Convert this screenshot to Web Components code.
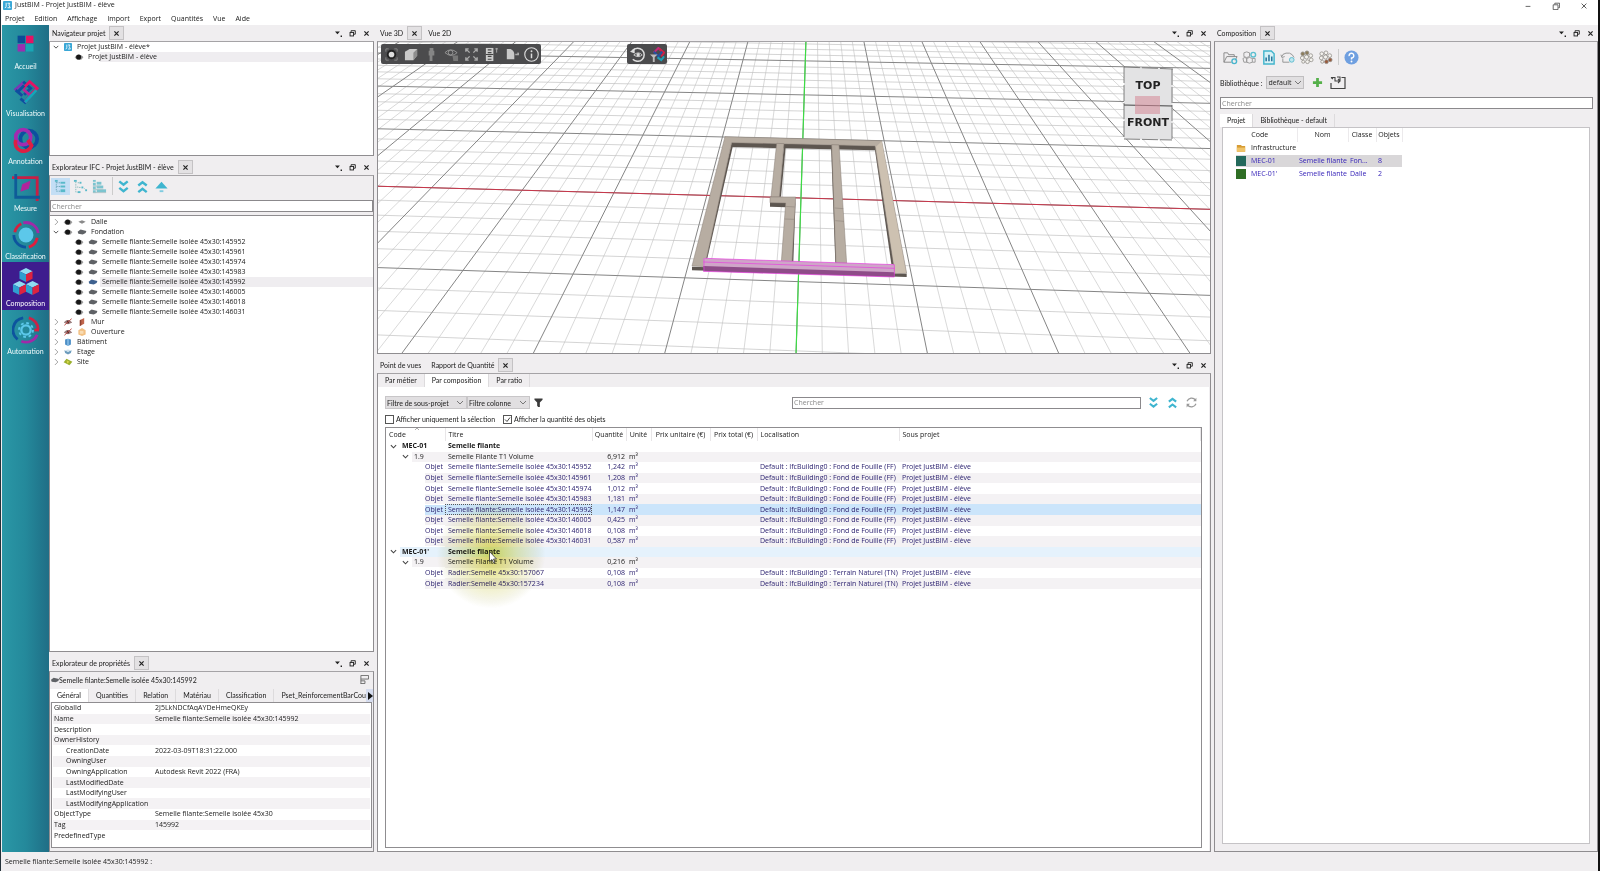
<!DOCTYPE html>
<html lang="fr">
<head>
<meta charset="utf-8">
<title>JustBIM - Projet JustBIM - élève</title>
<style>
html,body{margin:0;height:100%}
body{font:7px/10px "Open Sans","Noto Sans",sans-serif;color:#1a1a1a;background:#f0eef0;overflow:hidden;--ui:"Lato","Open Sans",sans-serif}
</style>
</head>
<body>
<bim-app></bim-app>
<script>
const define=(name,html,setup)=>{
  const t=document.createElement('template');t.innerHTML=html;
  customElements.define(name,class extends HTMLElement{
    constructor(){super();this.attachShadow({mode:'open'})}
    connectedCallback(){
      if(this.shadowRoot.firstChild)return;
      this.shadowRoot.append(t.content.cloneNode(true));
      if(setup)setup.call(this,this.shadowRoot);
    }
  });
};

/* ---------- icons ---------- */
const eye='<path d="M0 6Q5 0 11 4.500L12 6L9.500 9Q3 11 0 6Z" fill="#9a9a9a"/><circle cx="5.500" cy="5.500" r="3.500" fill="#161616"/>';
const cluster=(a,b)=>`<g fill="#f4f2ee" stroke="#8d8b86" stroke-width=".8"><circle cx="4" cy="4" r="2" fill="${a}"/><circle cx="8.500" cy="3" r="2" fill="${a}"/><circle cx="3.500" cy="8.500" r="2"/><circle cx="8" cy="7.500" r="2.200"/><circle cx="12.500" cy="6" r="2"/><circle cx="13" cy="10.500" r="2" fill="${b}"/><circle cx="9" cy="12.500" r="2" fill="${b}"/><circle cx="4.500" cy="12.500" r="1.600"/></g>`;
const cube=(x,y)=>`<g transform="translate(${x} ${y})"><path d="M7 0L14 3.500L7 7L0 3.500Z" fill="#8fdcf2"/><path d="M0 3.500L7 7V15L0 11.500Z" fill="#2f9fd0"/><path d="M7 7L14 3.500V11.500L7 15Z" fill="#dc2340"/></g>`;
const ICONS={
 logo:['0 0 10 10','<rect width="10" height="10" rx="1" fill="#3aa7d6"/><path d="M3.500 2V6Q3.500 7.500 2 7.500M5 2.500H7.500L6.500 4.500L8 7.500H5" fill="none" stroke="#fff"/>'],
 home:['0 0 30 30','<rect x="6" y="5" width="8" height="8" fill="#0c4b97"/><rect x="15" y="5" width="8" height="8" fill="#e51264"/><rect x="6" y="14" width="8" height="8" fill="#9a2fb0"/><rect x="15" y="14" width="8" height="8" fill="#18a6b5"/>'],
 visual:['0 0 30 30','<g fill="none" stroke-width="3"><path d="M13 4L4 12L11 19" stroke="#7b36b5"/><path d="M12 4L20 11L13 18" stroke="#0d4f9f"/><path d="M12 11L19 4L27 11L20 18" stroke="#e51264"/><path d="M6 15L13 8" stroke="#0d4f9f"/><path d="M11 19L4 13M9 22L14 26L18 22" stroke="#0d4f9f"/><path d="M12 12L20 19L14 26" stroke="#b5259a"/><path d="M26 13L14 26" stroke="#12a6b9"/></g>'],
 annot:['0 0 30 30','<g fill="none" stroke-width="4"><circle cx="18" cy="14" r="9" stroke="#0d4f9f"/><circle cx="12" cy="12" r="8" stroke="#a32bb0"/><path d="M4 15A9 9 0 1 0 21 21L17 15" stroke="#dc1f43"/></g>'],
 measure:['0 0 30 30','<g fill="none" stroke-width="3"><path d="M0 5H27V30" stroke="#c81f45"/><path d="M4 1V26H30" stroke="#0f5c98"/></g><path d="M9 20L11 12L20 8L18 17Z" fill="#b0249c"/>'],
 classif:['0 0 30 30','<circle cx="15" cy="15" r="8" fill="#5cc8ea"/><g fill="none" stroke-width="3"><path d="M3 12A13 13 0 0 1 10 3" stroke="#d4213f"/><path d="M12 2A13 13 0 0 1 28 13" stroke="#a02aa8"/><path d="M27 18A13 13 0 0 1 18 28" stroke="#e01d3d"/><path d="M2 15A13 13 0 0 0 15 28" stroke="#0d549e"/></g>'],
 compo:['0 0 30 30',cube(8,0)+cube(1,14)+cube(15,14)],
 auto:['0 0 30 30','<circle cx="15" cy="15" r="5" fill="none" stroke="#5cc8ea" stroke-width="2.500"/><circle cx="15" cy="15" r="7.500" fill="none" stroke="#5cc8ea" stroke-width="2" stroke-dasharray="3 2.900"/><g fill="none" stroke-width="3"><path d="M12 2A13 13 0 0 0 6 25" stroke="#0d549e"/><path d="M18 2A13 13 0 0 1 28 14" stroke="#c92448"/><path d="M29 15L24 15" stroke="#e01d3d"/><path d="M27 20A13 13 0 0 1 10 27" stroke="#a02aa8"/></g>'],
 chevR:['0 0 8 8','<path d="M2.500 0L6.500 4L2.500 8" fill="none" stroke="#888"/>'],
 chevD:['0 0 8 8','<path d="M1 2.500L4 5.500L7 2.500" fill="none" stroke="#444" stroke-width="1.200"/>'],
 eye:['0 0 12 11',eye],
 eyeoff:['0 0 12 11','<path d="M1 6Q5 1 11 6Q6 10 1 6Z" fill="#b9a7a7" stroke="#7c5555"/><circle cx="6" cy="5.500" r="2" fill="#533"/><path d="M1 10L11 1" stroke="#b8433c" stroke-width="1.300"/>'],
 slab:['0 0 12 11','<path d="M1 5L6 3L11 5L6 8Z" fill="#8a8a8a"/>'],
 found:['0 0 12 11','<path d="M0 5L4 2L12 4L11 7L7 9L1 8Z" fill="#5f6266"/>'],
 foundsel:['0 0 12 11','<path d="M0 5L4 2L12 4L11 7L7 9L1 8Z" fill="#3e618f"/>'],
 wall:['0 0 12 11','<path d="M3 3L9 0V8L3 11Z" fill="#c1654c"/><path d="M3 3L5 2V10L3 11Z" fill="#8d4334"/>'],
 opening:['0 0 12 11','<path d="M1 3L6 0L11 3V9L6 11L1 9Z" fill="#f2c083"/><path d="M3 4H8V8H3Z" fill="#f8dcb4"/>'],
 building:['0 0 12 11','<path d="M2 2L6 1L10 2V9L6 11L2 9Z" fill="#4d8fc7"/><path d="M6 1V11" stroke="#9fd0f2" stroke-width="1.500"/>'],
 storey:['0 0 12 11','<path d="M1 3L6 5L11 3L10 7L6 9L2 7Z" fill="#6d9dbd"/><path d="M2 3L6 5L10 3L6 2Z" fill="#cfe2ee"/>'],
 site:['0 0 12 11','<path d="M0 6L4 1L12 5L8 10Z" fill="#9bb02c"/><path d="M4 3L8 5L5 8Z" fill="#d9d64c"/>'],
 folder:['0 0 12 11','<path d="M1 2H6L7 3H11V10H1Z" fill="#d79c34"/><path d="M1 5H11V10H1Z" fill="#f0c469"/>'],
 sqTeal:['0 0 10 10','<rect width="10" height="10" fill="#23695b"/>'],
 sqGreen:['0 0 10 10','<rect width="10" height="10" fill="#2f6e25"/>'],
 tree1:['0 0 16 16','<g fill="#58b9c9"><rect x="2" y="1" width="3" height="2"/><rect x="8" y="3" width="5" height="2"/><rect x="8" y="7" width="5" height="2"/><rect x="8" y="11" width="5" height="3"/></g><path d="M3.500 3V13H8M3.500 8H8M3.500 4H8" fill="none" stroke="#6fa9bb" stroke-dasharray="1.500 1"/>'],
 tree2:['0 0 16 16','<g fill="#58b9c9"><rect x="1" y="1" width="3" height="2"/><rect x="7" y="3" width="2" height="2"/><rect x="5" y="13" width="3" height="2"/><rect x="9" y="8" width="2" height="2"/><rect x="13" y="11" width="2" height="2"/></g><path d="M3 3V14H5M5 4H7M5 8V9H9M12 10L13 11" fill="none" stroke="#8bb" stroke-dasharray="1.500 1"/>'],
 tree3:['0 0 16 16','<g fill="#7cc4cf"><rect x="1" y="1" width="3" height="2"/><rect x="1" y="4" width="3" height="3"/><rect x="1" y="8" width="3" height="3"/><rect x="1" y="12" width="3" height="3"/><rect x="5" y="3" width="5" height="3"/><rect x="5" y="7" width="7" height="3"/><rect x="5" y="11" width="10" height="3"/></g><path d="M1 7.500H9M1 11H12M1 14.500H15" stroke="#a9c3c8"/>'],
 down2:['0 0 16 16','<path d="M3.500 2.500L8 6L12.500 2.500M3.500 9.500L8 13L12.500 9.500" fill="none" stroke="#3fb5cf" stroke-width="2.600"/>'],
 up2:['0 0 16 16','<path d="M3.500 7L8 3.500L12.500 7M3.500 14L8 10.500L12.500 14" fill="none" stroke="#3fb5cf" stroke-width="2.600"/>'],
 upload:['0 0 16 16','<path d="M1.500 10L8 3L14.500 10Z" fill="#3fb5cf"/><path d="M6 12H10V14H6Z" fill="#7fcbe0"/>'],
 refresh:['0 0 16 16','<path d="M2.500 6.500A6 6 0 0 1 13 5M13.500 9.500A6 6 0 0 1 3 11" fill="none" stroke="#999" stroke-width="1.500"/><path d="M14 2V6.500H10ZM2 14V9.500H6Z" fill="#999"/>'],
 funnel:['0 0 10 10','<path d="M.5 .5H9.500V2L6.500 5V10H4.500L3.500 8.500V5L.5 2Z" fill="#3b3b3b"/>'],
 layout:['0 0 10 10','<path d="M1 10V.5H9.500V4.500H1M1 6.500H5.500V9.500H1" fill="none" stroke="#666"/>'],
 f1:['0 0 16 16','<path d="M1 13V3H5L6 5H12V7M1 13L4 7H15L13 11M1 13H9" fill="none" stroke="#888"/><circle cx="12" cy="12" r="2.500" fill="none" stroke="#49b5cd" stroke-width="1.500"/>'],
 f2:['0 0 16 16','<path d="M5 2L8 3V7L5 8L2 7V3ZM8 8L11 9V13L8 14L5 13V9ZM3 8L5 9V13L2 13L1 9Z" fill="none" stroke="#999"/><circle cx="12" cy="5" r="2.500" fill="none" stroke="#5bbfd0" stroke-width="1.500"/><path d="M11 9L14 9V13H11" fill="none" stroke="#999"/>'],
 f3:['0 0 16 16','<path d="M3 1H11L14 4V15H3Z" fill="#d7f1f6" stroke="#43b4cc" stroke-width="1.500"/><path d="M5.500 12V8M8.500 12V5M11.500 12V7" stroke="#24749b" stroke-width="1.600"/>'],
 f4:['0 0 16 16','<path d="M2 7A6 4 0 0 1 13 5L15 8M1 5L2 8L5 7M3 9V13H10" fill="none" stroke="#929292"/><circle cx="12.500" cy="10.500" r="2.500" fill="#bfe6ef" stroke="#5dbbce"/>'],
 f5:['0 0 16 16',cluster('#8d7d5c','#f4f2ee')],
 f6:['0 0 16 16',cluster('#f4f2ee','#9a5a3c')],
 help:['0 0 16 16','<circle cx="8" cy="8" r="7.500" fill="#6f9fe0"/><path d="M5.500 6.500A2.500 2.500 0 1 1 8 8.500V10" fill="none" stroke="#fff" stroke-width="1.500"/><circle cx="8" cy="12.200" r="1" fill="#fff"/>'],
 plus:['0 0 12 12','<path d="M6 1V11M1 6H11" stroke="#55b04a" stroke-width="3"/>'],
 importIc:['0 0 16 14','<path d="M1 7V12.500H15V1.500H11.500" fill="none" stroke="#444" stroke-width="1.200"/><path d="M1 1.500H5V5H10V1H7M3 3L1 1.500M8 3L10 5L8 7" fill="none" stroke="#444" stroke-width="1.100"/>'],
 v1:['0 0 16 16','<path d="M2 5V2H5M11 2H14V5M14 11V14H11M5 14H2V11" fill="none" stroke="#888"/><circle cx="8" cy="8" r="5" fill="#222"/><circle cx="8" cy="8" r="3" fill="#ddd"/>'],
 v2:['0 0 16 16','<path d="M1 5L6 2H14V9L10 14H1Z" fill="#c9c9c9"/><path d="M10 6L14 2V9L10 14Z" fill="#8e8e8e"/>'],
 v3:['0 0 16 16','<path d="M6 1H10V4H11V9H9V15H6V9H5V4H6Z" fill="#858585"/>'],
 v4:['0 0 16 16','<path d="M1 6Q7 0 14 6Q8 12 1 6Z" fill="none" stroke="#999"/><circle cx="7" cy="6" r="2.500" fill="none" stroke="#999"/><path d="M9 9H15V15H10Z" fill="#777"/>'],
 v5:['0 0 16 16','<g fill="none" stroke="#aaa" stroke-width="1.500"><path d="M6 6L2 2M2 5V2H5M10 6L14 2M11 2H14V5M6 10L2 14M2 11V14H5M10 10L14 14M11 14H14V11"/></g>'],
 v6:['0 0 16 16','<path d="M2 1H10V15H2Z" fill="#ccc"/><path d="M4 3H8M4 6H8M4 10H8M4 13H8M2 8H10" stroke="#444" stroke-width="1.200"/><path d="M12 2H15M13.500 1V6" stroke="#aaa"/>'],
 v7:['0 0 16 16','<path d="M3 2H7Q11 4 11 8Q11 12 11 13H3Z" fill="#c9c9c9"/><path d="M12 8H16M14.500 6L16 8" stroke="#aaa" stroke-width="1.500"/>'],
 v8:['0 0 16 16','<circle cx="8" cy="8" r="7.200" fill="none" stroke="#ddd" stroke-width="1.200"/><path d="M8 7V12" stroke="#ddd" stroke-width="1.600"/><circle cx="8" cy="4.500" r="1" fill="#ddd"/>'],
 w1:['0 0 16 16','<path d="M3 3.500A7 7 0 1 1 3 13" fill="none" stroke="#ddd" stroke-width="1.600"/><path d="M0 5L5 7L5 1Z" fill="#ddd"/><path d="M4 8.500Q9 4 13 8.500Q9 12 4 8.500Z" fill="none" stroke="#ccc"/><circle cx="8.700" cy="8.300" r="1.800" fill="#ddd"/>'],
 w2:['0 0 16 16','<g fill="none" stroke-width="2.200"><path d="M4 6L9 1L12 4" stroke="#c22a78"/><path d="M10 2L15 6L12 10" stroke="#d31f45"/><path d="M4 5L9 10L13 5" stroke="#27509f"/><path d="M8 11L12 14L15 10" stroke="#1d9fb5"/></g><path d="M0 8H8L5 11V16H3V11Z" fill="#bbb"/>'],
 menuTri:['0 0 10 10','<path d="M0 2H7L3.500 6Z" fill="#222"/><path d="M8 8H10V10H8Z" fill="#222"/>'],
 restore:['0 0 10 10','<path d="M3 3V1H9V6H7" fill="none" stroke="#222" stroke-width="1.300"/><rect x="1.500" y="3.500" width="5" height="5" fill="none" stroke="#222" stroke-width="1.300"/>'],
 close:['0 0 10 10','<path d="M2 2L8 8M8 2L2 8" stroke="#222" stroke-width="1.700"/>'],
 wmin:['0 0 10 10','<path d="M2 5.500H8" stroke="#444"/>'],
 wmax:['0 0 10 10','<path d="M3.500 3V1.500H9.500V7H8M1.500 3.500H7.500V9.500H1.500Z" fill="none" stroke="#444"/>'],
 wclose:['0 0 10 10','<path d="M2 2L8 8M8 2L2 8" stroke="#333"/>'],
 arrowR:['0 0 8 8','<path d="M2 0L7 4L2 8Z" fill="#111"/>'],
 sortUp:['0 0 6 4','<path d="M1 3L3 1L5 3" fill="none" stroke="#999" stroke-width=".8"/>']
};
define('bim-icon','<style>:host{display:inline-flex;flex:none;width:10px;height:10px}svg{width:100%;height:100%;display:block}</style>',function(r){
  const [vb,body]=ICONS[this.getAttribute('name')];
  r.innerHTML+=`<svg viewBox="${vb}" aria-hidden="true">${body}</svg>`;
});

/* ---------- dock panel ---------- */
define('dock-panel',`<style>
:host{display:flex;flex-direction:column;min-width:0;min-height:0}
header{display:flex;align-items:center;height:16px;flex:none;padding:0 3px;white-space:nowrap}
.tab{all:unset;padding-right:4px;line-height:14px;font-family:var(--ui)}
.tab+.tab,.x+.tab{padding-left:6px;padding-right:3px}
.x{all:unset;box-sizing:border-box;width:15px;height:14px;border:1px solid #c4c2c4;background:#e3e1e3;display:flex;align-items:center;justify-content:center}
.x bim-icon,.tools bim-icon{width:7px;height:7px}
.tools{margin-left:auto;display:flex;gap:7px;padding-right:1px}
.tools button{all:unset;display:flex}
.body{flex:1;display:flex;flex-direction:column;min-height:0;border:1px solid #8f8d90;border-top-color:#a5a3a6;box-sizing:border-box}
:host([plain]) .body{background:#fff}
</style><header></header><div class="body"><slot></slot></div>`,function(r){
  const active=+(this.getAttribute('active')||0);
  r.querySelector('header').innerHTML=this.getAttribute('tabs').split('|').map((t,i)=>
    `<button class="tab">${t}</button>`+(i===active?'<button class="x" aria-label="Fermer"><bim-icon name="close"></bim-icon></button>':'')).join('')+
    '<div class="tools">'+[['menuTri','Menu'],['restore','Détacher'],['close','Fermer']].map(([n,l])=>`<button aria-label="${l}"><bim-icon name="${n}"></bim-icon></button>`).join('')+'</div>';
});

/* ---------- search field ---------- */
define('search-field',`<style>
:host{display:block}
input{display:block;width:100%;box-sizing:border-box;height:12px;border:1px solid #8b898c;background:#fff;font:inherit;padding:0 1px;border-radius:0;outline:0}
input::placeholder{color:#8a8a8a}
</style><input type="text" placeholder="Chercher" aria-label="Chercher">`);

/* ---------- tab strip ---------- */
define('tab-strip',`<style>
:host{display:flex;height:13px;align-items:stretch;white-space:nowrap;overflow:hidden;flex:none;position:relative;font-family:var(--ui)}
button{all:unset;padding:0 7px;line-height:13px;border-right:1px solid #dddbdd}
button.on{background:#fff}
.next{position:absolute;right:0;top:0;height:13px;width:7px;padding:0;border:0;background:#d5dcee;display:flex;align-items:center}
.next bim-icon{width:8px;height:8px}
</style>`,function(r){
  const on=+(this.getAttribute('active')||0);
  r.innerHTML+=this.getAttribute('tabs').split('|').map((t,i)=>`<button${i===on?' class="on"':''}>${t}</button>`).join('')+
    (this.hasAttribute('more')?'<button class="next" aria-label="Suivant"><bim-icon name="arrowR"></bim-icon></button>':'');
});

/* ---------- main sidebar ---------- */
define('side-bar',`<style>
:host{display:block;width:47px;flex:none;margin-left:1px;background:linear-gradient(to right,#2a97a6,#24899b 50%,#1f6e86);font-family:var(--ui)}
nav{display:flex;flex-direction:column;height:332px}
a{flex:1;display:flex;flex-direction:column;align-items:center;color:#f0fafb;text-decoration:none;padding-top:6px;box-sizing:border-box}
a.on{background:#3e1c8e;color:#fff}
bim-icon{width:28px;height:28px}
span{margin-top:2px;line-height:10px}
</style><nav></nav>`,function(r){
  r.querySelector('nav').innerHTML=[['home','Accueil'],['visual','Visualisation'],['annot','Annotation'],['measure','Mesure'],['classif','Classification'],['compo','Composition'],['auto','Automation']]
   .map(([i,t])=>`<a href="#${i}"${i==='compo'?' class="on"':''}><bim-icon name="${i}"></bim-icon><span>${t}</span></a>`).join('');
});

/* ---------- tree ---------- */
define('tree-view',`<style>
:host{display:block}
.row{display:flex;align-items:center;height:10px;white-space:nowrap;line-height:10px}
.chev{width:8px;height:6px;margin:0 3px 0 2px}
.gap{width:12px;flex:none}
.ic{width:10px;height:8px;margin-right:4px}
.label{flex:1}
.row.sel{background:linear-gradient(to right,transparent 50px,#efedf0 50px)}
</style>`,function(r){
  const src=this.getAttribute('src');
  const S='Semelle filante:Semelle isolée 45x30:';
  const rows=src==='nav'
   ?[['chevD',['logo'],'Projet JustBIM - élève*'],['',['eye'],'Projet JustBIM - élève','sel']]
   :[['chevR',['eye','slab'],'Dalle'],['chevD',['eye','found'],'Fondation'],
     ...['145952','145961','145974','145983','145992','146005','146018','146031'].map(n=>['',['eye',n==='145992'?'foundsel':'found'],S+n,n==='145992'?'sel':'']),
     ['chevR',['eyeoff','wall'],'Mur'],['chevR',['eyeoff','opening'],'Ouverture'],['chevR',['building'],'Bâtiment'],['chevR',['storey'],'Etage'],['chevR',['site'],'Site']];
  r.innerHTML+=rows.map(([c,ic,t,s])=>`<div class="row ${s||''}">${c?`<bim-icon class="chev" name="${c}"></bim-icon>`:'<i class="gap"></i><i class="gap"></i>'}${ic.map(n=>`<bim-icon class="ic" name="${n}"></bim-icon>`).join('')}<span class="label">${t}</span></div>`).join('');
});

/* ---------- properties ---------- */
define('prop-table',`<style>
:host{display:block;flex:1;background:#fff;border:1px solid #8f8d90;margin:0 1px 3px 1px;padding:0 1px}
table{border-collapse:collapse;width:100%;height:138px;table-layout:fixed}
td,th{padding:0 0 0 1px;font-weight:400;text-align:left;line-height:10px;white-space:nowrap;overflow:visible}
th{width:101px;box-sizing:border-box}
th.in{padding-left:13px}
tr:nth-child(even){background:#f4f2f4}
</style><table></table>`,function(r){
  r.querySelector('table').innerHTML=[['GlobalId','2J5LkNDCfAqAYDeHmeQKEy'],['Name','Semelle filante:Semelle isolée 45x30:145992'],['Description',''],['OwnerHistory',''],['>CreationDate','2022-03-09T18:31:22.000'],['>OwningUser',''],['>OwningApplication','Autodesk Revit 2022 (FRA)'],['>LastModifiedDate',''],['>LastModifyingUser',''],['>LastModifyingApplication',''],['ObjectType','Semelle filante:Semelle isolée 45x30'],['Tag','145992'],['PredefinedType','']]
   .map(([k,v])=>`<tr><th scope="row"${k[0]==='>'?' class="in"':''}>${k.replace('>','')}</th><td>${v}</td></tr>`).join('');
});

/* ---------- quantities ---------- */
define('quantity-table',`<style>
:host{display:block;flex:1;background:#fff;border:1px solid #8f8d90;position:relative}
table{border-collapse:collapse;width:100%;height:161px;table-layout:fixed}
th,td{padding:0 0 0 3px;font-weight:400;text-align:left;line-height:10px;white-space:nowrap}
thead th{height:13px;border-right:1px solid #e8e6e8;box-sizing:border-box;position:relative}
thead bim-icon{position:absolute;left:28px;top:-1px;width:6px;height:4px}
th.c{text-align:center;padding:0}
td:first-child{padding:0}
.n{text-align:right;padding-right:1px}
.code{display:flex;align-items:center;height:10px;gap:5px}
.code bim-icon{width:7px;height:7px;margin-left:-10px}
.l0 .code{margin-left:14px}.l1 .code{margin-left:26px}.l2 .code{margin-left:39px}
.l2 td{color:#2c2270}
.l0 td{font-weight:700}
tbody tr:nth-child(even) td:not(:first-child),tbody tr:nth-child(even) .code{background:#f4f2f4}
tbody tr.sel td:not(:first-child),tbody tr.sel .code{background:#cbe5fb}
tbody tr.hot td:not(:first-child),tbody tr.hot .code{background:#e5f2fc}
tr.sel .t{outline:1px dotted #555;outline-offset:-1px}
.halo{position:absolute;left:50px;top:71px;width:110px;height:110px;border-radius:50%;background:radial-gradient(circle,rgba(216,214,60,.8) 0,rgba(222,220,120,.5) 35%,rgba(225,225,190,.3) 60%,rgba(255,255,255,0) 70%);mix-blend-mode:multiply}
.cursor{position:absolute;left:103px;top:123px;width:8px;height:13px}
</style><table><colgroup><col style="width:59px"><col style="width:147px"><col style="width:34px"><col style="width:25px"><col style="width:59px"><col style="width:47px"><col style="width:142px"><col></colgroup>
<thead><tr><th>Code<bim-icon name="sortUp"></bim-icon></th><th>Titre</th><th class="c">Quantité</th><th class="c">Unité</th><th class="c">Prix unitaire (€)</th><th class="c">Prix total (€)</th><th>Localisation</th><th>Sous projet</th></tr></thead><tbody></tbody></table>
<div class="halo"></div><svg class="cursor" viewBox="0 0 8 13"><path d="M.5 .5V10.500L3 8.500L4.500 12L6 11.500L4.500 8H7.500Z" fill="#fff" stroke="#333" stroke-width=".8"/></svg>`,function(r){
  const S='Semelle filante:Semelle isolée 45x30:',F='Default : IfcBuilding0 : Fond de Fouille (FF)',T='Default : IfcBuilding0 : Terrain Naturel (TN)',P='Projet JustBIM - élève';
  const rows=[[0,'MEC-01','Semelle filante',''],[1,'1.9','Semelle Filante T1 Volume','6,912'],
   ...[['145952','1,242'],['145961','1,208'],['145974','1,012'],['145983','1,181'],['145992','1,147'],['146005','0,425'],['146018','0,108'],['146031','0,587']].map(([n,q])=>[2,'Objet',S+n,q,F,P,n==='145992'?'sel':'']),
   [0,"MEC-01'",'Semelle filante','','','','hot'],[1,'1.9','Semelle Filante T1 Volume','0,216'],
   [2,'Objet','Radier:Semelle 45x30:157067','0,108',T,P],[2,'Objet','Radier:Semelle 45x30:157234','0,108',T,P]];
  r.querySelector('tbody').innerHTML=rows.map(([l,c,t,q,loc='',sp='',cl=''])=>`<tr class="l${l} ${cl}"><td><div class="code">${l<2?'<bim-icon name="chevD"></bim-icon>':''}<span>${c}</span></div></td><td class="t">${t}</td><td class="n">${q}</td><td>${q?'m³':''}</td><td></td><td></td><td>${loc}</td><td>${sp}</td></tr>`).join('');
});

/* ---------- quantity report ---------- */
define('quantity-report',`<style>
:host{display:flex;flex-direction:column;flex:1;min-height:0}
.page{flex:1;display:flex;flex-direction:column;background:#fff;padding:9px 7px 3px 7px;margin-right:1px}
.bar{display:flex;align-items:center;height:13px}
select{appearance:none;font:inherit;font-family:var(--ui);color:#222;height:13px;border:1px solid #c8c6c8;border-radius:0;padding:0 12px 0 1px;background:#e1dfe1 url("data:image/svg+xml,%3Csvg xmlns='http://www.w3.org/2000/svg' width='8' height='6'%3E%3Cpath d='M1 1L4 4L7 1' fill='none' stroke='%23777'/%3E%3C/svg%3E") no-repeat right 2px center}
.s1{width:82px}.s2{width:63px}
.funnel{width:9px;height:9px;margin-left:4px}
search-field{flex:0 0 349px;margin-left:auto}
.act{width:13px;height:13px;margin-left:6px}
.last{margin-right:4px}
.checks{display:flex;align-items:center;height:10px;margin:5px 0 3px;font-family:var(--ui)}
input{appearance:none;width:9px;height:9px;margin:0 2px 0 0;border:1px solid #555;background:#fff}
input:checked{background:#fff url("data:image/svg+xml,%3Csvg xmlns='http://www.w3.org/2000/svg' width='7' height='7'%3E%3Cpath d='M1 3.500L3 5.500L6 1.500' fill='none' stroke='%23444'/%3E%3C/svg%3E") no-repeat center}
label{margin-right:8px}
</style><tab-strip tabs="Par métier|Par composition|Par ratio" active="1"></tab-strip>
<div class="page"><div class="bar"><select class="s1" aria-label="Filtre de sous-projet"><option>Filtre de sous-projet</option></select><select class="s2" aria-label="Filtre colonne"><option>Filtre colonne</option></select><bim-icon class="funnel" name="funnel"></bim-icon><search-field></search-field><bim-icon class="act" name="down2"></bim-icon><bim-icon class="act" name="up2"></bim-icon><bim-icon class="act last" name="refresh"></bim-icon></div>
<div class="checks"><input type="checkbox" id="a"><label for="a">Afficher uniquement la sélection</label><input type="checkbox" id="b" checked><label for="b">Afficher la quantité des objets</label></div>
<quantity-table></quantity-table></div>`);

/* ---------- composition library ---------- */
define('composition-panel',`<style>
:host{display:flex;flex-direction:column;flex:1;padding:7px 4px 7px 5px}
.tools{display:flex;align-items:center;height:16px;gap:4px;padding-left:3px}
.tools bim-icon{width:15px;height:15px}
.sep{width:1px;height:16px;background:#ccc;margin:0 1px}
.lib{display:flex;align-items:center;height:13px;margin:11px 0 8px}
label,select{font-family:var(--ui)}
select{appearance:none;font:inherit;color:#222;width:38px;height:13px;margin-left:4px;border:1px solid #c0bec0;border-radius:0;padding:0 0 0 1px;background:#e1dfe1 url("data:image/svg+xml,%3Csvg xmlns='http://www.w3.org/2000/svg' width='8' height='6'%3E%3Cpath d='M1 1L4 4L7 1' fill='none' stroke='%23777'/%3E%3C/svg%3E") no-repeat right 1px center}
.plus{margin:0 7px 0 8px;width:11px;height:11px}
.imp{width:16px;height:14px}
tab-strip{margin-top:5px}
.list{flex:1;background:#fff;border:1px solid #c5c3c6;margin:0 3px 0 2px}
table{border-collapse:collapse;table-layout:fixed;width:179px;height:52px}
th,td{padding:0 0 0 2px;text-align:left;font-weight:400;line-height:10px;white-space:nowrap}
thead th{text-align:center;padding:0;height:14px;border-right:1px solid #eceaec;box-sizing:border-box}
td:first-child{padding-left:13px}
.cell{display:flex;align-items:center;gap:5px;height:12px}
tbody tr{color:#3522b8}tbody tr.dir{color:#222}
tr.sel td:not(:first-child),tr.sel .cell{background:#d9d7d9}
.cell bim-icon{width:10px;height:10px}
</style>
<div class="tools">${['f1','f2','f3','f4','f5','f6'].map(n=>`<bim-icon name="${n}"></bim-icon>`).join('')}<i class="sep"></i><bim-icon name="help"></bim-icon></div>
<div class="lib"><label for="lib">Bibliothèque :</label><select id="lib"><option>default</option></select><bim-icon class="plus" name="plus"></bim-icon><bim-icon class="imp" name="importIc"></bim-icon></div>
<search-field></search-field>
<tab-strip tabs="Projet|Bibliothèque - default" active="0"></tab-strip>
<div class="list"><table><colgroup><col style="width:74px"><col style="width:51px"><col style="width:28px"><col style="width:26px"></colgroup><thead><tr><th>Code</th><th>Nom</th><th>Classe</th><th>Objets</th></tr></thead>
<tbody><tr class="dir"><td><div class="cell"><bim-icon name="folder"></bim-icon>Infrastructure</div></td><td></td><td></td><td></td></tr>
<tr class="sel"><td><div class="cell"><bim-icon name="sqTeal"></bim-icon>MEC-01</div></td><td>Semelle filante</td><td>Fon...</td><td>8</td></tr>
<tr><td><div class="cell"><bim-icon name="sqGreen"></bim-icon>MEC-01'</div></td><td>Semelle filante</td><td>Dalle</td><td>2</td></tr></tbody></table></div>`);

/* ---------- 3D view ---------- */
/* Least-squares homography taking grid coordinates (major cells) to view coordinates. */
function homography(points){
  const rows=[];
  for(const [u,v,px,py] of points){
    const x=(px-800)/400,y=(py-200)/400;
    rows.push([u,v,1,0,0,0,-u*x,-v*x,x],[0,0,0,u,v,1,-u*y,-v*y,y]);
  }
  const m=Array.from({length:8},(_,i)=>Array.from({length:9},(_,j)=>rows.reduce((s,r)=>s+r[i]*r[j],0)));
  for(let i=0;i<8;i++){
    let p=i;for(let k=i+1;k<8;k++)if(Math.abs(m[k][i])>Math.abs(m[p][i]))p=k;
    [m[i],m[p]]=[m[p],m[i]];
    for(let k=0;k<8;k++)if(k!==i){const f=m[k][i]/m[i][i];for(let j=i;j<9;j++)m[k][j]-=f*m[i][j]}
  }
  const h=m.map((row,i)=>row[8]/row[i]);
  return (u,v)=>{const w=h[6]*u+h[7]*v+1;return [800+400*(h[0]*u+h[1]*v+h[2])/w,200+400*(h[3]*u+h[4]*v+h[5])/w]};
}
define('scene-3d',`<style>
:host{display:block;flex:1;position:relative;overflow:hidden;background:#fff;min-height:0}
.view{position:absolute;inset:0;width:100%;height:100%}
.bar{position:absolute;top:2px;height:20px;background:#4b4b4d;border-radius:2px;display:flex;align-items:center;justify-content:space-around;box-sizing:border-box}
.a{left:3px;width:160px}.b{left:249px;width:40px}
.bar bim-icon{width:15px;height:15px}
.cube{position:absolute;right:36px;top:23px;width:52px;height:76px}
text{font:700 11px "DejaVu Sans",sans-serif;fill:#222}
</style><svg class="view" viewBox="378 41 832 313" preserveAspectRatio="xMidYMid slice"></svg>
<div class="bar a">${['v1','v2','v3','v4','v5','v6','v7','v8'].map(n=>`<bim-icon name="${n}"></bim-icon>`).join('')}</div>
<div class="bar b"><bim-icon name="w1"></bim-icon><bim-icon name="w2"></bim-icon></div>
<svg class="cube" viewBox="0 0 52 76"><path d="M2 2L51 4L50 75L2 74Z" fill="#e3e3e4"/><path d="M2 2L51 4M50 4V75M2 2V74L50 75" fill="none" stroke="#666" stroke-width=".8" stroke-dasharray="16 2"/><path d="M2 40L50 41" stroke="#444"/><path d="M13 31H38V49H13Z" fill="#d68f9c" opacity=".6"/><text x="26" y="24" text-anchor="middle">TOP</text><text x="26" y="61" text-anchor="middle">FRONT</text></svg>`,function(r){
  const p=homography([[-4,0,431,188],[-3,0,523,190],[-2,0,614,193],[0,0,801,198],[2,0,993,203],[3,0,1091,206],[4,0,1190,209],
   [-3,1,463,270],[-2,1,573,274],[1,1,913,286],[2,1,1031,289],[3,1,1149,294],
   [-3,-1,564,133],[-2,-1,643,135],[2,-1,966,142],[3,-1,1050,145],
   [-3,-2,596,91],[-2,-2,664,92],[2,-2,947,98],[3,-2,1019,99],[4,-2,1091,101]]);
  const line=(a,b,c,w)=>{const [x,y]=p(...a),[z,t]=p(...b);return `<line x1="${x}" y1="${y}" x2="${z}" y2="${t}" stroke="${c}" stroke-width="${w}"/>`};
  let minor='',major='';
  for(let i=-50;i<=50;i++){const u=i/5,l=line([u,-5],[u,2.2],i%5?'#c8c8c8':'#858585',i%5?.7:1);i%5?minor+=l:major+=l}
  for(let i=-25;i<=11;i++){const v=i/5,l=line([-10,v],[10,v],i%5?'#c2c2c2':'#858585',i%5?.7:1);i%5?minor+=l:major+=l}
  r.querySelector('.view').innerHTML=minor+major+line([-10,0],[10,0],'#c8364a',1)+line([0,-5],[0,2.2],'#3ddc45',1.2)+
  `<g transform="translate(680 120) scale(.33333)" stroke-linejoin="round">
   <g fill="#5d5650"><path d="M155 67L585 77V91L155 81Z"/><path d="M583 77L600 90L648 434L634 432Z"/><path d="M155 68L160 72L82 415L75 415Z"/><path d="M312 72L317 80L303 230H297ZM344 262L347 234L340 425H334ZM453 74L458 72L470 428H466Z"/><path d="M270 246L318 248V262L270 260Z"/><path d="M36 440L680 461V471L36 451Z"/></g>
   <g fill="#b7ada2" stroke="#877e75" stroke-width="1.500"><path fill-rule="evenodd" d="M135 50L605 62L680 460L645 461L585 78L155 68L74 440L36 438Z"/>
   <path d="M290 70L312 71L298 231L273 231Z"/><path d="M455 74L477 75L500 430L468 430Z"/><path d="M270 231L347 231L336 426L304 425L317 249L270 248Z"/><path d="M317 259L344 261M314 297L342 298M464 264L490 266M466 302L492 304" fill="none"/></g>
   <path d="M588 80L605 64L678 458L646 460Z" fill="#cdc1b1"/>
   <path d="M70 415L643 434V461L70 442Z" fill="#cfa5c8"/><path d="M70 438L643 457V471L70 454Z" fill="#8e4c88"/>
   <path d="M76 415L643 434M70 426L643 445M72 414V454M643 434V470M70 454L643 471" fill="none" stroke="#e73be0" stroke-width="2"/></g>`;
});

/* ---------- application ---------- */
define('bim-app',`<style>
:host{display:flex;flex-direction:column;height:100vh;box-sizing:border-box;border-left:1px solid #24323a;border-right:2px solid #111;background:#f0eef0}
.title{display:flex;align-items:center;height:11px;background:#fff;padding-left:2px;line-height:9px}
.title bim-icon{width:9px;height:9px}
.title span{margin-left:3px;padding-bottom:2px}
.win{margin-left:auto;display:flex;gap:20px;padding-right:10px}
.win button{all:unset;display:flex}
.win bim-icon{width:8px;height:8px}
.menu{display:flex;gap:10px;height:14px;line-height:15px;background:#fff;padding-left:4px}
.menu a{color:inherit;text-decoration:none}
main{flex:1;display:flex;min-height:0}
.left{width:325px;flex:none;margin:0 3px 0 0;display:flex;flex-direction:column;gap:3px}
.mid{flex:1;min-width:0;display:flex;flex-direction:column;gap:3px;margin-right:3px}
.right{width:384px;flex:none}
.nav{height:131px}
.ifc{flex:1}
.props{height:197px}
.v3d{height:329px}
.rep{flex:1}
.ifctools{display:flex;align-items:center;height:18px;gap:4px;padding:1px 1px 5px;background:#f0eef0}
.ifctools bim-icon{width:15px;height:15px}
.ifctools .on{background:#c3def5;padding:1px 2px;margin-right:-1px}
.sep{width:1px;height:18px;background:#ccc;margin:0 -1px 0 1px}
.frame{flex:1;border-top:1px solid #8f8d90;margin-top:3px;background:#fff;padding-top:1px}
.name{display:flex;align-items:center;height:15px;padding:0 4px 2px 1px;font-family:var(--ui)}
.name .lay{margin-left:auto;width:9px;height:9px}
.name .o{width:8px;height:8px}
footer{height:19px;line-height:19px;padding-left:4px;flex:none}
</style>
<div class="title"><bim-icon name="logo"></bim-icon><span>JustBIM - Projet JustBIM - élève</span><div class="win"><button aria-label="Réduire"><bim-icon name="wmin"></bim-icon></button><button aria-label="Restaurer"><bim-icon name="wmax"></bim-icon></button><button aria-label="Fermer"><bim-icon name="wclose"></bim-icon></button></div></div>
<nav class="menu">${['Projet','Edition','Affichage','Import','Export','Quantités','Vue','Aide'].map(t=>`<a href="#">${t}</a>`).join('')}</nav>
<main><side-bar></side-bar>
<div class="left">
<dock-panel class="nav" tabs="Navigateur projet" plain><tree-view src="nav"></tree-view></dock-panel>
<dock-panel class="ifc" tabs="Explorateur IFC - Projet JustBIM - élève"><div class="ifctools"><bim-icon class="on" name="tree1"></bim-icon><bim-icon name="tree2"></bim-icon><bim-icon name="tree3"></bim-icon><i class="sep"></i><bim-icon name="down2"></bim-icon><bim-icon name="up2"></bim-icon><bim-icon name="upload"></bim-icon></div><search-field></search-field><div class="frame"><tree-view src="ifc"></tree-view></div></dock-panel>
<dock-panel class="props" tabs="Explorateur de propriétés"><div class="name"><bim-icon class="o" name="found"></bim-icon><span>Semelle filante:Semelle isolée 45x30:145992</span><bim-icon class="lay" name="layout"></bim-icon></div><tab-strip tabs="Général|Quantities|Relation|Matériau|Classification|Pset_ReinforcementBarCount" more></tab-strip><prop-table></prop-table></dock-panel>
</div>
<div class="mid">
<dock-panel class="v3d" tabs="Vue 3D|Vue 2D"><scene-3d></scene-3d></dock-panel>
<dock-panel class="rep" tabs="Point de vues|Rapport de Quantité" active="1"><quantity-report></quantity-report></dock-panel>
</div>
<dock-panel class="right" tabs="Composition"><composition-panel></composition-panel></dock-panel>
</main>
<footer>Semelle filante:Semelle isolée 45x30:145992 :</footer>`);
</script>
</body>
</html>
